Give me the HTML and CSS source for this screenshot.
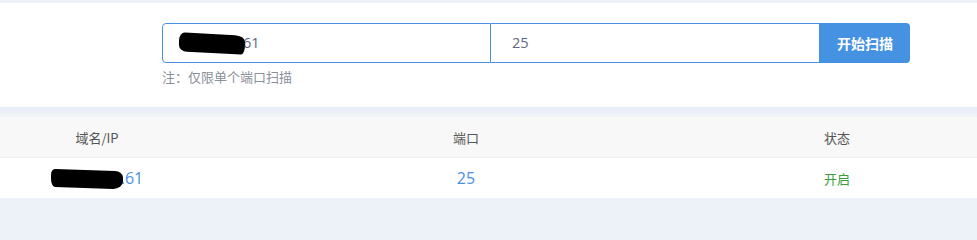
FILE: index.html
```html
<!DOCTYPE html>
<html lang="zh-CN">
<head>
<meta charset="utf-8">
<title>端口扫描</title>
<link rel="stylesheet" href="styles.css">
</head>
<body>
<div class="page">
  <section class="panel">
    <div class="form">
      <div class="field-row">
        <div class="input host"><span class="blot blot-a"></span><span class="val">61</span></div>
        <div class="input port"><span class="val">25</span></div>
        <button class="btn">开始扫描</button>
      </div>
      <div class="note">注：仅限单个端口扫描</div>
    </div>
  </section>
  <div class="gap"></div>
  <section class="table">
    <div class="thead">
      <div class="cell">域名/IP</div>
      <div class="cell">端口</div>
      <div class="cell">状态</div>
      <div class="cell"></div>
    </div>
    <div class="trow">
      <div class="cell link"><span class="blot blot-b"></span>.61</div>
      <div class="cell link num">25</div>
      <div class="cell ok">开启</div>
      <div class="cell"></div>
    </div>
  </section>
</div>
</body>
</html>
```

FILE: styles.css
```css
* { box-sizing: border-box; }
html, body { margin: 0; padding: 0; }
body {
  background: #edf2f8;
  font-family: "Open Sans", "Noto Sans CJK SC", sans-serif;
  width: 977px;
  height: 207px;
  overflow: hidden;
}
.page { padding-top: 3px; }
.panel {
  background: #fff;
  height: 104px;
  padding: 20px 0 0 162px;
}
.field-row {
  display: flex;
  height: 40px;
  width: 748px;
}
.input {
  border: 1px solid #4a90e2;
  height: 40px;
  display: flex;
  align-items: center;
  font-size: 14.5px;
  color: #5d6785;
  background: #fff;
}
.host {
  width: 329px;
  border-radius: 4px 0 0 4px;
  padding-left: 16px;
}
.port {
  width: 329px;
  border-left: none;
  padding-left: 21px;
}
.val { line-height: 1; }
.btn {
  width: 90px;
  height: 40px;
  border: none;
  background: #4592e3;
  color: #fff;
  font-family: "Noto Sans CJK SC", sans-serif;
  font-size: 14px;
  font-weight: 700;
  border-radius: 0 4px 4px 0;
  padding: 0;
}
.note {
  margin-top: 4px;
  font-size: 13px;
  color: #8a8f99;
  font-family: "Noto Sans CJK SC", sans-serif;
}
.blot {
  display: inline-block;
  background: #000;
}
.blot-a {
  width: 66px;
  height: 19px;
  border-radius: 6px 10px 4px 8px / 8px 6px 10px 6px;
  transform: skewY(3deg);
  margin-right: -2px;
}
.blot-b {
  width: 72px;
  height: 18px;
  border-radius: 4px 8px 10px 4px / 6px 6px 8px 8px;
  transform: skewY(2deg);
  vertical-align: -4px;
  margin-right: -2px;
}
.gap {
  height: 10px;
  background: linear-gradient(#e6edf6, #f1f4f9);
}
.thead, .trow {
  display: grid;
  grid-template-columns: 194px 544px 198px 1fr;
  align-items: center;
}
.thead {
  height: 41px;
  background: #f8f8f8;
  border-bottom: 1px solid #eeeeee;
  font-family: "Noto Sans CJK SC", sans-serif;
  font-size: 13px;
  color: #555;
}
.trow {
  height: 40px;
  background: #fff;
}
.cell { text-align: center; }
.link { color: #4a90e2; font-size: 16px; }
.ok {
  color: #3a9c3a;
  font-family: "Noto Sans CJK SC", sans-serif;
  font-size: 13px;
}
```
